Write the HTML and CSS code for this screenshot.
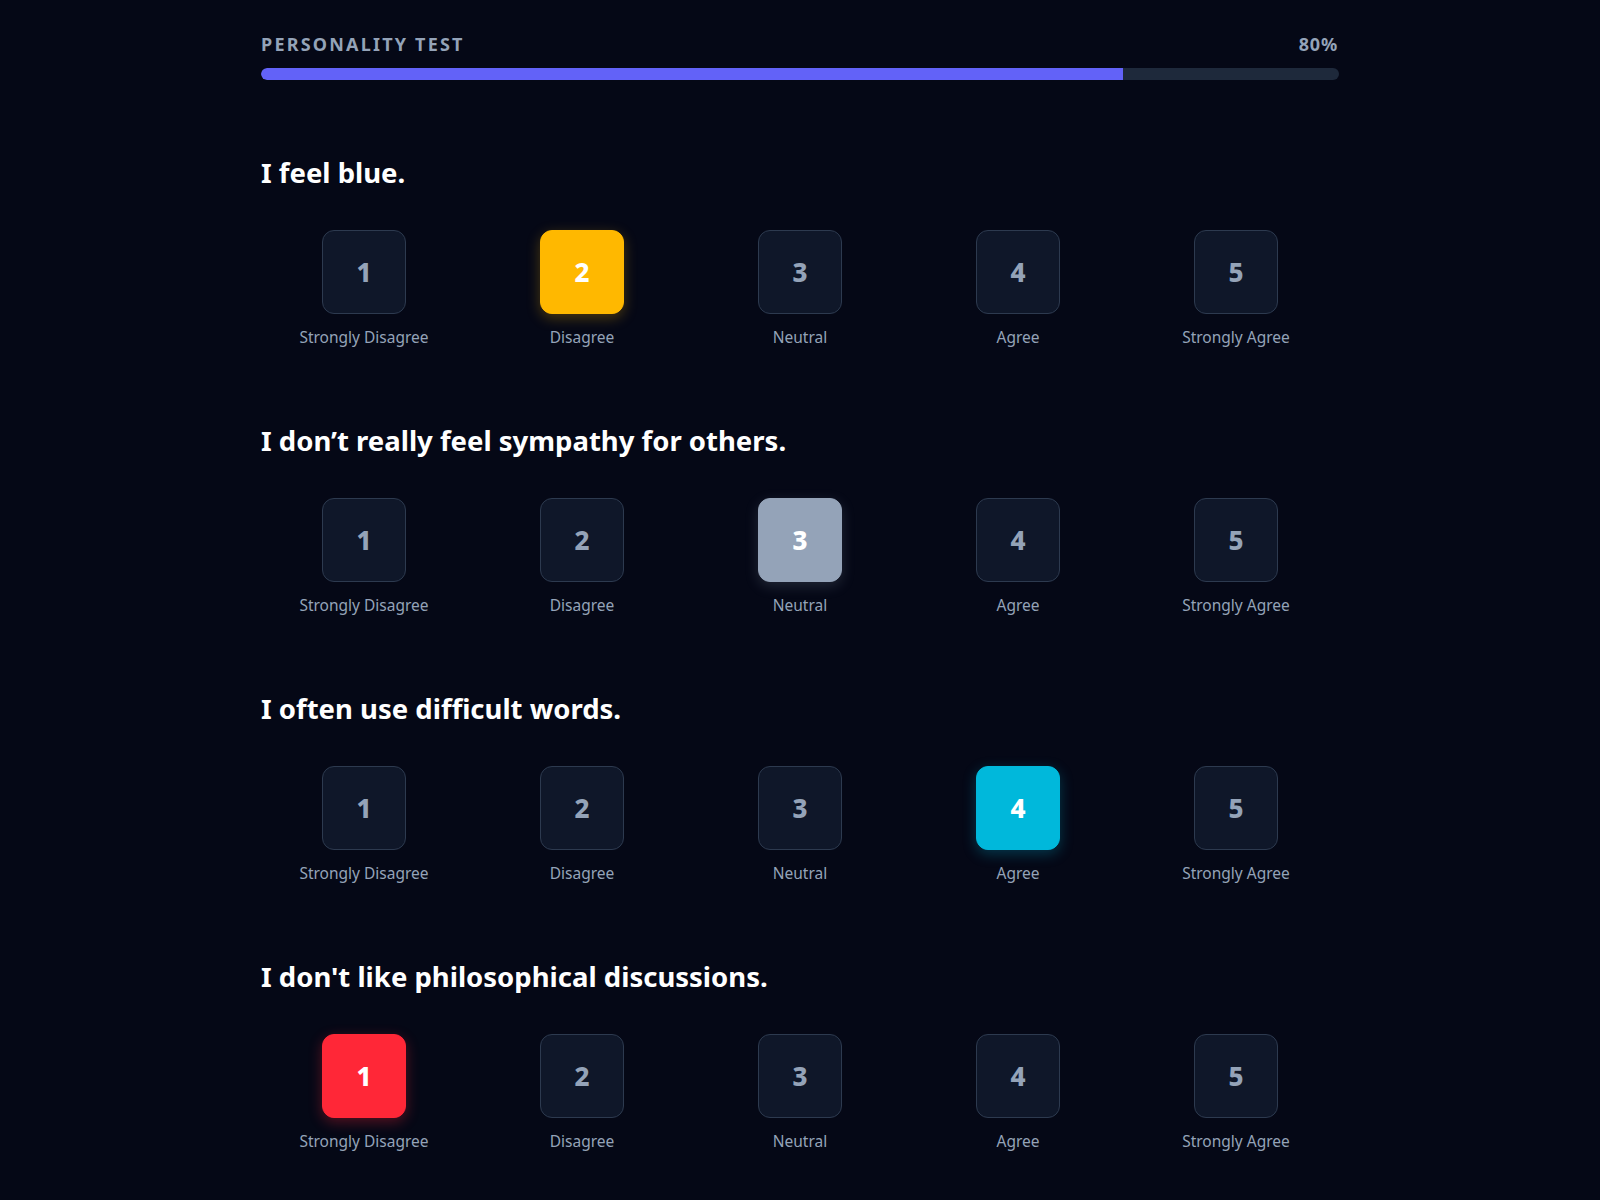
FILE: index.html
```html
<!DOCTYPE html>
<html lang="en">
<head>
<meta charset="utf-8">
<title>Personality Test</title>
<link rel="stylesheet" href="styles.css">
</head>
<body>
<main class="page">
  <header class="progress">
    <div class="progress-head">
      <span class="progress-title">PERSONALITY TEST</span>
      <span class="progress-value">80%</span>
    </div>
    <div class="track"><div class="fill" style="width: 80%"></div></div>
  </header>

  <section class="question">
    <h2 class="q-title">I feel blue.</h2>
    <div class="options">
      <div class="option"><div class="box">1</div><span class="label">Strongly Disagree</span></div>
      <div class="option"><div class="box sel-yellow">2</div><span class="label">Disagree</span></div>
      <div class="option"><div class="box">3</div><span class="label">Neutral</span></div>
      <div class="option"><div class="box">4</div><span class="label">Agree</span></div>
      <div class="option"><div class="box">5</div><span class="label">Strongly Agree</span></div>
    </div>
  </section>

  <section class="question">
    <h2 class="q-title">I don’t really feel sympathy for others.</h2>
    <div class="options">
      <div class="option"><div class="box">1</div><span class="label">Strongly Disagree</span></div>
      <div class="option"><div class="box">2</div><span class="label">Disagree</span></div>
      <div class="option"><div class="box sel-gray">3</div><span class="label">Neutral</span></div>
      <div class="option"><div class="box">4</div><span class="label">Agree</span></div>
      <div class="option"><div class="box">5</div><span class="label">Strongly Agree</span></div>
    </div>
  </section>

  <section class="question">
    <h2 class="q-title">I often use difficult words.</h2>
    <div class="options">
      <div class="option"><div class="box">1</div><span class="label">Strongly Disagree</span></div>
      <div class="option"><div class="box">2</div><span class="label">Disagree</span></div>
      <div class="option"><div class="box">3</div><span class="label">Neutral</span></div>
      <div class="option"><div class="box sel-cyan">4</div><span class="label">Agree</span></div>
      <div class="option"><div class="box">5</div><span class="label">Strongly Agree</span></div>
    </div>
  </section>

  <section class="question">
    <h2 class="q-title">I don't like philosophical discussions.</h2>
    <div class="options">
      <div class="option"><div class="box sel-red">1</div><span class="label">Strongly Disagree</span></div>
      <div class="option"><div class="box">2</div><span class="label">Disagree</span></div>
      <div class="option"><div class="box">3</div><span class="label">Neutral</span></div>
      <div class="option"><div class="box">4</div><span class="label">Agree</span></div>
      <div class="option"><div class="box">5</div><span class="label">Strongly Agree</span></div>
    </div>
  </section>
</main>
</body>
</html>
```

FILE: styles.css
```css
html, body {
  margin: 0;
  padding: 0;
  background: #050816;
}

body {
  font-family: "Noto Sans", "Open Sans", sans-serif;
  color: #f8fafc;
  min-height: 1200px;
}

.page {
  width: 1078px;
  margin: 0 auto;
  padding-top: 32px;
}

.progress-head {
  display: flex;
  justify-content: space-between;
  align-items: baseline;
  height: 24px;
  line-height: 24px;
}

.progress-title,
.progress-value {
  font-size: 18px;
  font-weight: 700;
  color: #94a3b8;
}

.progress-title {
  letter-spacing: 2.2px;
}

.progress-value {
  letter-spacing: 0.8px;
  margin-right: 1px;
}

.track {
  margin-top: 12px;
  height: 12px;
  border-radius: 6px;
  background: #1e293b;
  overflow: hidden;
}

.fill {
  height: 100%;
  background: #6262f8;
  border-radius: 6px 0 0 6px;
}

.question {
  margin-top: 75px;
}

.question + .question {
  margin-top: 76px;
}

.q-title {
  margin: 0;
  font-size: 27.5px;
  line-height: 36px;
  font-weight: 700;
  color: #ffffff;
}

.options {
  margin-top: 39px;
  display: grid;
  grid-template-columns: repeat(5, 218px);
  justify-content: center;
}

.option {
  display: flex;
  flex-direction: column;
  align-items: center;
}

.box {
  box-sizing: border-box;
  width: 84px;
  height: 84px;
  border-radius: 12px;
  background: #0f1729;
  border: 1.5px solid #2d3a4f;
  display: flex;
  align-items: center;
  justify-content: center;
  font-size: 26px;
  font-weight: 800;
  color: #94a3b8;
}

.label {
  margin-top: 13px;
  font-size: 15.5px;
  line-height: 20px;
  color: #94a3b8;
}

.sel-yellow {
  background: #ffb800;
  border-color: #ffb800;
  color: #ffffff;
  box-shadow: 0 4px 14px rgba(255, 184, 0, 0.28);
}

.sel-gray {
  background: #94a3b8;
  border-color: #94a3b8;
  color: #ffffff;
  box-shadow: 0 4px 14px rgba(148, 163, 184, 0.2);
}

.sel-cyan {
  background: #00b8db;
  border-color: #00b8db;
  color: #ffffff;
  box-shadow: 0 4px 14px rgba(0, 184, 219, 0.28);
}

.sel-red {
  background: #ff2737;
  border-color: #ff2737;
  color: #ffffff;
  box-shadow: 0 4px 14px rgba(255, 39, 55, 0.32);
}
```
